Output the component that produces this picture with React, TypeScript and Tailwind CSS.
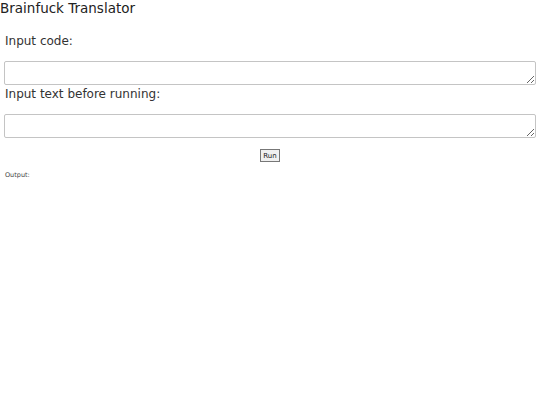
export default function App() {
  return (
    <div className="min-h-screen bg-white text-[#333] font-['DejaVu_Sans',sans-serif]">
      <h1 className="text-[13.5px] leading-[16px] text-[#222]">Brainfuck Translator</h1>
      <div className="px-[4px]">
        <p className="mt-[18px] ml-[1px] text-[12px] leading-[14px]">Input code:</p>
        <textarea className="mt-[13px] block w-full h-[24px] border border-[#c4c4c4] rounded-[2px] resize-y" />
        <p className="mt-[2px] ml-[1px] text-[12px] leading-[14px]">Input text before running:</p>
        <textarea className="mt-[13px] block w-full h-[24px] border border-[#c4c4c4] rounded-[2px] resize-y" />
        <div className="flex justify-center mt-[11px]">
          <button className="h-[13px] px-[2px] text-[7px] leading-[10px] border border-[#777] bg-[#f0f0f0] text-[#222]">
            Run
          </button>
        </div>
        <p className="mt-[9px] ml-[1px] text-[6.5px] leading-[9px] text-[#444]">Output:</p>
      </div>
    </div>
  )
}
